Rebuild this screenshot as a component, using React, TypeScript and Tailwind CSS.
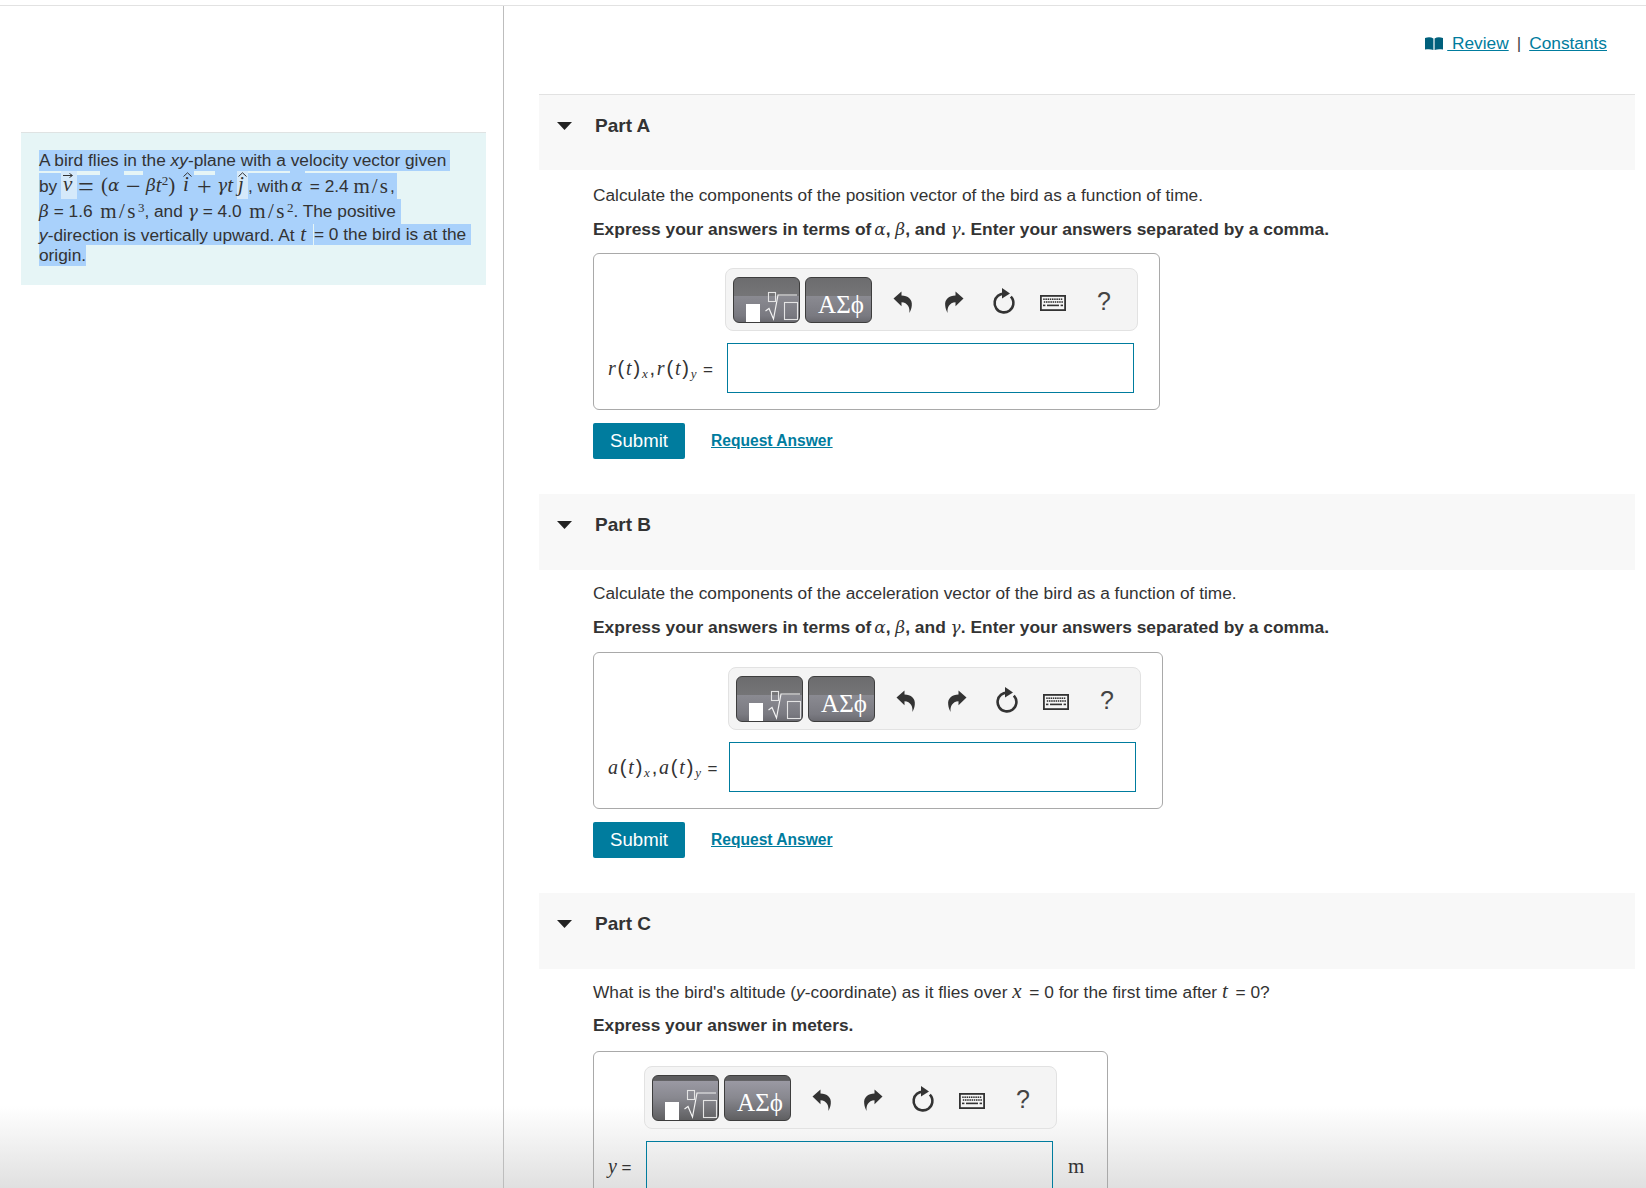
import React from "react";

const SERIF = "font-['Liberation_Serif',serif]";

const M = ({ children, className = "" }: { children: React.ReactNode; className?: string }) => (
  <span className={`${SERIF} italic ${className}`}>{children}</span>
);
const R = ({ children, className = "" }: { children: React.ReactNode; className?: string }) => (
  <span className={`${SERIF} ${className}`}>{children}</span>
);
const Gk = ({ children, className = "" }: { children: React.ReactNode; className?: string }) => (
  <span className={`font-['DejaVu_Serif',serif] text-[17px] font-normal italic ${className}`}>{children}</span>
);

function Seg({ w, h = 28, children, pale = false }: { w: string; h?: number; children?: React.ReactNode; pale?: boolean }) {
  return (
    <span
      className={`flex shrink-0 items-center self-end whitespace-pre ${w} ${pale ? "bg-[#d5e9fa]" : "bg-[#a9d1fb]"}`}
      style={{ height: h }}
    >
      {children}
    </span>
  );
}

const Hat = ({ children }: { children: React.ReactNode }) => (
  <span className="relative inline-block">
    <M className="text-[21px]">{children}</M>
    <svg width="9" height="5" viewBox="0 0 9 5" className="absolute -top-[2px] left-[0px]">
      <path d="M0.5 4.5 L4.5 0.8 L8.5 4.5" fill="none" stroke="#333" strokeWidth="1" />
    </svg>
  </span>
);

function Undo({ flip = false }: { flip?: boolean }) {
  return (
    <svg width="20" height="24" viewBox="0 0 20 24" className={flip ? "-scale-x-100" : ""}>
      <path d="M0.5 8.5 L8.5 1.5 V5.6 C15 5.6 19.5 9.5 18.8 15.5 C18.6 18 17.6 21 16.4 23 C17 17.5 14.8 12.6 8.5 12.2 V16.2 Z" fill="#333" />
    </svg>
  );
}

function Refresh() {
  return (
    <svg width="24" height="29" viewBox="0 0 24 29">
      <circle cx="12" cy="16" r="9.4" fill="none" stroke="#333" strokeWidth="2.6" strokeDasharray="51 8" strokeDashoffset="-6" transform="rotate(-80 12 16)" />
      <path d="M10 1 L18 6.5 L10 11.5 Z" fill="#333" />
    </svg>
  );
}

function Keyboard() {
  const keys: React.ReactNode[] = [];
  for (let i = 0; i < 9; i++) keys.push(<rect key={`a${i}`} x={3.2 + i * 2.2} y={3.4} width="1.5" height="1.6" fill="#333" />);
  for (let i = 0; i < 9; i++) keys.push(<rect key={`b${i}`} x={3.8 + i * 2.2} y={6.2} width="1.5" height="1.6" fill="#333" />);
  return (
    <svg width="27" height="16" viewBox="0 0 26 16">
      <rect x="0.9" y="0.9" width="24.2" height="14.2" fill="#f6f6f6" stroke="#333" strokeWidth="1.8" />
      {keys}
      <rect x="3" y="9.6" width="2.4" height="1.6" fill="#333" />
      <rect x="7" y="9.6" width="12" height="1.6" fill="#333" />
      <rect x="20.6" y="9.6" width="2.4" height="1.6" fill="#333" />
    </svg>
  );
}

function Toolbar({ variant }: { variant: "a" | "c" }) {
  const bg =
    variant === "a"
      ? "bg-[linear-gradient(#6c6c6e_0,#757577_41%,#8a8a91_42%,#7a7a81_85%,#6a6a70_100%)]"
      : "bg-[linear-gradient(#5c5c5e_0,#5c5c5e_10%,#9a99a3_12%,#88888f_50%,#5f5f61_100%)]";
  const btn = `relative h-[46px] w-[67px] overflow-hidden rounded-[6px] border border-[#3d3d3d] ${bg}`;
  return (
    <div className="flex h-[63px] w-[413px] items-center rounded-[8px] border border-[#e2e2e2] bg-[#f4f4f4] pl-[7px]">
      <div className={btn}>
        <span className="absolute left-[12px] top-[26px] h-[18px] w-[14px] bg-white" />
        <svg width="66" height="46" viewBox="0 0 66 46" className="absolute left-0 top-0">
          <rect x="34.5" y="14.5" width="7" height="9" fill="none" stroke="#e4e4e4" strokeWidth="1.1" />
          <path d="M31.5 33 L35 30.5 L39.5 41 L44 17 H63" fill="none" stroke="#f2f2f2" strokeWidth="1.2" />
          <rect x="50.5" y="24.5" width="13" height="17" fill="none" stroke="#e4e4e4" strokeWidth="1.1" />
        </svg>
      </div>
      <div className={`${btn} ml-[5px] flex items-end justify-center pb-[2px] pl-[5px]`}>
        <span className={`${SERIF} text-[25px] leading-[30px] text-white`}>ΑΣϕ</span>
      </div>
      <div className="ml-[21px] mt-[4px] flex h-[30px] w-[20px] items-center justify-center"><Undo /></div>
      <div className="ml-[31px] mt-[4px] flex h-[30px] w-[20px] items-center justify-center"><Undo flip /></div>
      <div className="ml-[28px] mt-[4px] flex h-[30px] w-[24px] items-center justify-center"><Refresh /></div>
      <div className="ml-[24px] mt-[7px] flex h-[30px] w-[26px] items-center justify-center"><Keyboard /></div>
      <span className="ml-[31px] mt-[2px] text-[25px] font-normal leading-[30px] text-[#444]">?</span>
    </div>
  );
}

function PartHeader({ name, className = "" }: { name: string; className?: string }) {
  return (
    <div className={`flex h-[76px] items-start bg-[#f8f8f8] pl-[18px] pt-[19px] ${className}`}>
      <svg width="15" height="8" viewBox="0 0 15 8" className="mt-[8px]">
        <path d="M0 0 H15 L7.5 8 Z" fill="#222" />
      </svg>
      <span className="ml-[23px] text-[19px] font-bold leading-[24px] text-[#333]">{name}</span>
    </div>
  );
}

function Actions() {
  return (
    <div className="mt-[13px] flex items-center">
      <button className="h-[36px] w-[92px] rounded-[2px] bg-[#007c9e] text-[18.6px] text-white">Submit</button>
      <a className="ml-[26px] text-[15.6px] font-bold text-[#007c9e] underline">Request Answer</a>
    </div>
  );
}

function Express() {
  return (
    <p className="mt-[12px] h-[22px] text-[17.4px] font-bold leading-[22px] text-[#333]">
      Express your answers in terms of <Gk className="-ml-[2px]">α</Gk>, <Gk>β</Gk>, and <Gk>γ</Gk>. Enter your answers separated by a comma.
    </p>
  );
}

function AnswerBox({ label, width, pl, lw, mt }: { label: React.ReactNode; width: string; pl: string; lw: string; mt: string }) {
  return (
    <div className={`h-[157px] rounded-[6px] border border-[#a9a9a9] bg-white pt-[14px] ${mt} ${width}`}>
      <div className={pl}><Toolbar variant="a" /></div>
      <div className="mt-[12px] flex items-center pl-[14px]">
        <span className={`shrink-0 whitespace-nowrap text-[20px] tracking-[1.8px] text-[#333] ${lw}`}>{label}</span>
        <div className="h-[50px] w-[407px] border border-[#007c9e] bg-white" />
      </div>
    </div>
  );
}

const Sub = ({ children }: { children: React.ReactNode }) => <sub className="text-[13px]">{children}</sub>;
const Eq = () => <span className="text-[17px] tracking-normal"> =</span>;

export default function App() {
  return (
    <div className="relative h-[1188px] w-[1646px] overflow-hidden bg-white font-['Liberation_Sans',Arial,sans-serif] text-[#333]">
      <div className="absolute bottom-0 left-0 h-[82px] w-full bg-[linear-gradient(#ffffff,#e0e0e0)]" />
      <div className="relative mt-[5px] flex h-full border-t border-[#e2e2e2]">
        <aside className="w-[504px] shrink-0 border-r border-[#bdbdbd] pl-[21px] pr-[17px] pt-[126px]">
          <div className="h-[153px] border-t border-[#dfe3e3] bg-[#e6f5f6] pl-[18px] pt-[17px] text-[17.3px] leading-[21px] text-[#333]">
            <div className="flex h-[21px]">
              <span className="whitespace-nowrap bg-[#a9d1fb] pr-[4px]">A bird flies in the <i>xy</i>-plane with a velocity vector given</span>
            </div>
            <div className="flex h-[28px]">
              <Seg w="w-[22px]" h={26}>by</Seg>
              <Seg w="w-[16px]" h={28} pale>
                <span className="relative ml-[2px] inline-block">
                  <M className="text-[21px]">v</M>
                  <svg width="10" height="5" viewBox="0 0 10 5" className="absolute -top-[1px] left-0">
                    <path d="M0 2.5 H9 M6.5 0.5 L9.5 2.5 L6.5 4.5" fill="none" stroke="#333" strokeWidth="1" />
                  </svg>
                </span>
              </Seg>
              <Seg w="w-[23px]" h={24}><R className="ml-[1px] text-[28px] leading-none">=</R></Seg>
              <Seg w="w-[24px]"><R className="text-[21px] ml-[1px]">(</R><Gk>α</Gk></Seg>
              <Seg w="w-[19px]" h={24}><R className="ml-[2px] text-[26px] leading-none">−</R></Seg>
              <Seg w="w-[38px]"><Gk className="ml-[3px]">β</Gk><M className="text-[21px]">t</M><R className="-mt-[9px] text-[13px]">2</R><R className="text-[21px]">)</R></Seg>
              <Seg w="w-[13px]"><span className="ml-[2px]"><Hat>i</Hat></span></Seg>
              <Seg w="w-[21px]" h={24}><R className="ml-[3px] text-[26px] leading-none">+</R></Seg>
              <Seg w="w-[22px]"><Gk className="ml-[2px]">γ</Gk><M className="text-[21px]">t</M></Seg>
              <Seg w="w-[11px]" pale><span className="ml-[1px]"><Hat>j</Hat></span></Seg>
              <Seg w="w-[42px]" h={26}>, with</Seg>
              <Seg w="w-[15px]"><Gk className="ml-[1px]">α</Gk></Seg>
              <Seg w="w-[92px]" h={26}> = 2.4 <R className="text-[21px] tracking-[2px]">m/s</R>,</Seg>
            </div>
            <div className="flex h-[25px]">
              <Seg w="w-[362px]" h={25}>
                <Gk>β</Gk> = 1.6 <R className="ml-[3px] text-[21px] tracking-[2.4px]">m/s</R><R className="-mt-[8px] text-[13px]">3</R>, and <Gk>γ</Gk> = 4.0 <R className="ml-[3px] text-[21px] tracking-[2.4px]">m/s</R><R className="-mt-[8px] text-[13px]">2</R>. The positive
              </Seg>
            </div>
            <div className="flex h-[21px]">
              <span className="whitespace-pre bg-[#a9d1fb]"><i>y</i>-direction is vertically upward. At <M className="ml-[1px] mr-[2px] text-[21px] leading-[21px]">t</M> </span>
              <span className="ml-[1px] whitespace-pre bg-[#a9d1fb] pr-[5px]">= 0 the bird is at the</span>
            </div>
            <div className="flex h-[21px]"><span className="bg-[#a9d1fb]">origin.</span></div>
          </div>
        </aside>
        <main className="min-w-0 flex-1 pl-[35px] pr-[11px]">
          <div className="flex h-[88px] items-start justify-end pr-[28px] pt-[26px] text-[17.3px] leading-[22px] text-[#007c9e]">
            <svg width="18" height="13" viewBox="0 0 18 13" className="mt-[5px]">
              <path d="M0 1 C3 0 6 0 8.4 1.4 V13 C6 12 3 12 0 12.6 Z M9.6 1.4 C12 0 15 0 18 1 V12.6 C15 12 12 12 9.6 13 Z" fill="#00607c" />
            </svg>
            <a className="ml-[4px] whitespace-pre underline"> Review</a>
            <span className="mx-[8px] text-[#444]">|</span>
            <a className="underline">Constants</a>
          </div>
          <PartHeader name="Part A" className="border-t border-[#e2e2e2]" />
          <div className="pl-[54px]">
            <p className="mt-[14px] text-[17.3px] leading-[22px] text-[#333]">Calculate the components of the position vector of the bird as a function of time.</p>
            <Express />
            <AnswerBox mt="mt-[13px]" width="w-[567px]" pl="pl-[131px]" lw="w-[119px]" label={<><M>r</M>(<M>t</M>)<Sub><M>x</M></Sub>,<M>r</M>(<M>t</M>)<Sub><M>y</M></Sub><Eq /></>} />
            <Actions />
          </div>
          <PartHeader name="Part B" className="mt-[35px]" />
          <div className="pl-[54px]">
            <p className="mt-[12px] text-[17.3px] leading-[22px] text-[#333]">Calculate the components of the acceleration vector of the bird as a function of time.</p>
            <Express />
            <AnswerBox mt="mt-[14px]" width="w-[570px]" pl="pl-[134px]" lw="w-[121px]" label={<><M>a</M>(<M>t</M>)<Sub><M>x</M></Sub>,<M>a</M>(<M>t</M>)<Sub><M>y</M></Sub><Eq /></>} />
            <Actions />
          </div>
          <PartHeader name="Part C" className="mt-[35px]" />
          <div className="pl-[54px]">
            <p className="mt-[11px] h-[22px] text-[17.3px] leading-[22px] text-[#333]">What is the bird's altitude (<i>y</i>-coordinate) as it flies over <M className="mr-[3px] text-[21px]">x</M> = 0 for the first time after <M className="mr-[3px] text-[21px]">t</M> = 0?</p>
            <p className="mt-[12px] text-[17.3px] font-bold leading-[22px] text-[#333]">Express your answer in meters.</p>
            <div className="mt-[15px] h-[200px] w-[515px] rounded-[6px] border border-[#a9a9a9] pt-[14px]">
              <div className="pl-[50px]"><Toolbar variant="c" /></div>
              <div className="mt-[12px] flex items-start pl-[14px]">
                <span className="mt-[10px] w-[38px] shrink-0 whitespace-pre text-[20px]"><M>y</M><span className="text-[17px]"> =</span></span>
                <div className="h-[60px] w-[407px] border border-[#007c9e]" />
                <R className="ml-[15px] mt-[10px] text-[21px]">m</R>
              </div>
            </div>
          </div>
        </main>
      </div>
    </div>
  );
}
